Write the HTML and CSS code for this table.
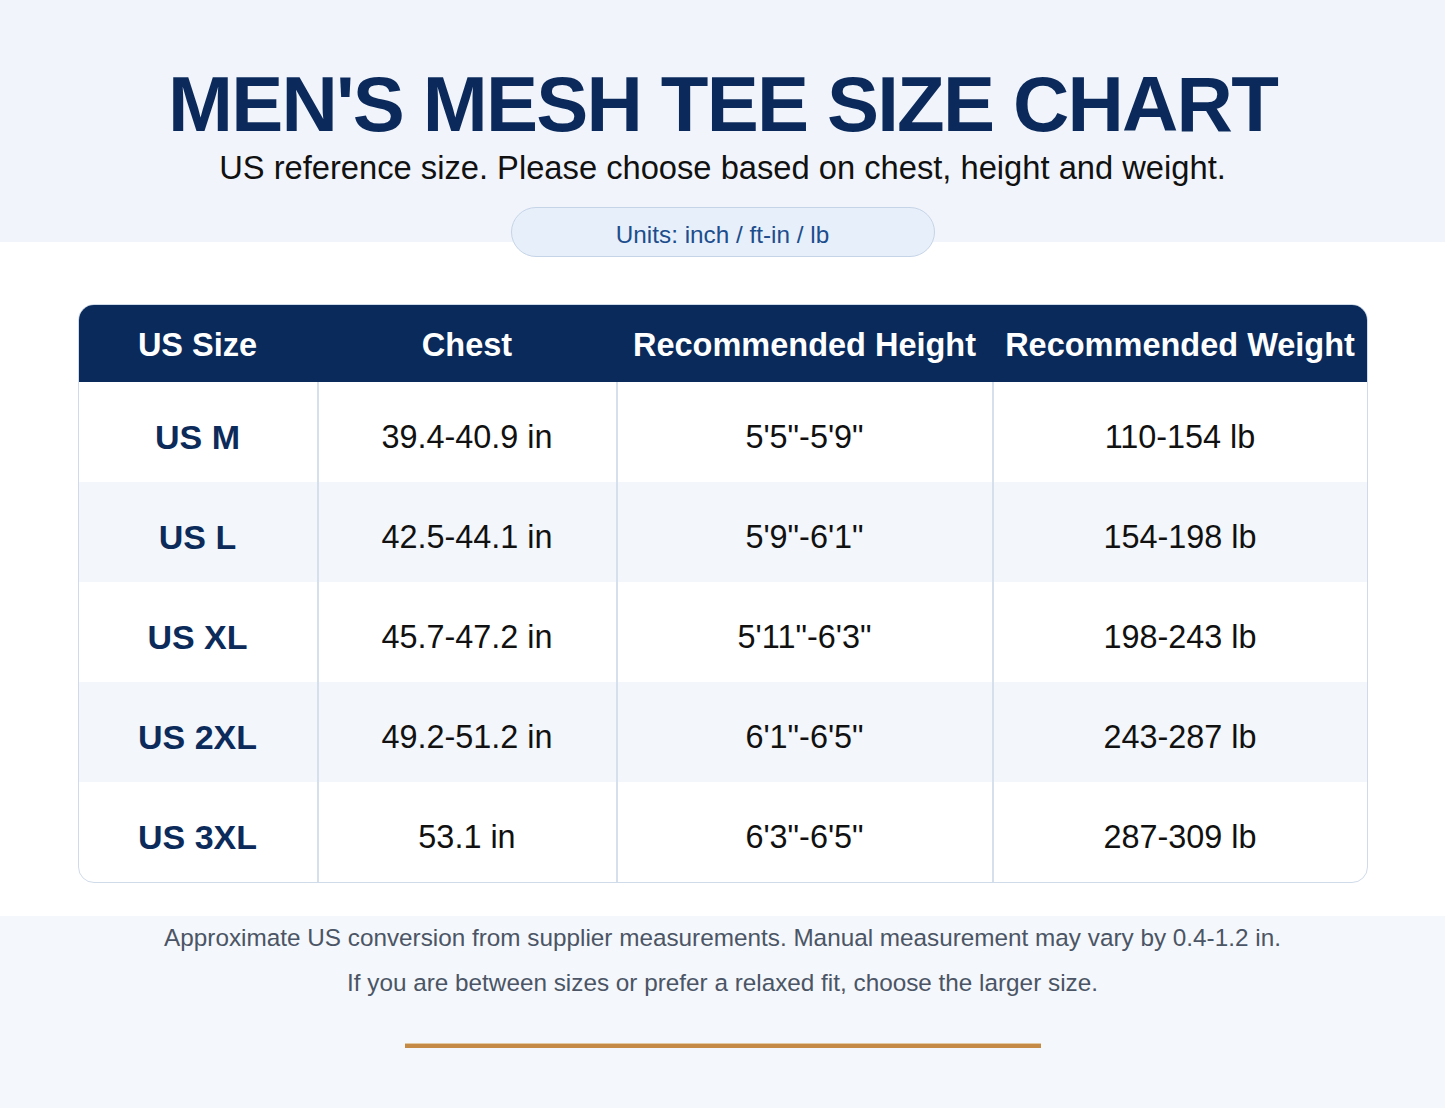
FILE: index.html
```html
<!DOCTYPE html>
<html lang="en">
<head>
<meta charset="utf-8">
<title>Men's Mesh Tee Size Chart</title>
<link rel="stylesheet" href="styles.css">
</head>
<body>
<header class="hero">
  <h1 class="title">MEN'S MESH TEE SIZE CHART</h1>
  <p class="subtitle">US reference size. Please choose based on chest, height and weight.</p>
  <div class="units">Units: inch / ft-in / lb</div>
</header>

<main class="chart-wrap">
  <div class="chart">
    <div class="row head">
      <div class="cell">US Size</div>
      <div class="cell">Chest</div>
      <div class="cell">Recommended Height</div>
      <div class="cell">Recommended Weight</div>
    </div>
    <div class="row">
      <div class="cell size">US M</div>
      <div class="cell">39.4-40.9 in</div>
      <div class="cell">5'5"-5'9"</div>
      <div class="cell">110-154 lb</div>
    </div>
    <div class="row alt">
      <div class="cell size">US L</div>
      <div class="cell">42.5-44.1 in</div>
      <div class="cell">5'9"-6'1"</div>
      <div class="cell">154-198 lb</div>
    </div>
    <div class="row">
      <div class="cell size">US XL</div>
      <div class="cell">45.7-47.2 in</div>
      <div class="cell">5'11"-6'3"</div>
      <div class="cell">198-243 lb</div>
    </div>
    <div class="row alt">
      <div class="cell size">US 2XL</div>
      <div class="cell">49.2-51.2 in</div>
      <div class="cell">6'1"-6'5"</div>
      <div class="cell">243-287 lb</div>
    </div>
    <div class="row">
      <div class="cell size">US 3XL</div>
      <div class="cell">53.1 in</div>
      <div class="cell">6'3"-6'5"</div>
      <div class="cell">287-309 lb</div>
    </div>
  </div>
</main>

<footer class="notes">
  <p>Approximate US conversion from supplier measurements. Manual measurement may vary by 0.4-1.2 in.</p>
  <p>If you are between sizes or prefer a relaxed fit, choose the larger size.</p>
  <div class="rule"></div>
</footer>
</body>
</html>
```

FILE: styles.css
```css
html, body {
  margin: 0;
  padding: 0;
}

body {
  background: #ffffff;
  font-family: "Liberation Sans", Arial, sans-serif;
  color: #111111;
  width: 1445px;
  min-height: 1108px;
  display: flex;
  flex-direction: column;
}

.hero {
  background: #f1f5fb;
  display: flex;
  flex-direction: column;
  align-items: center;
  padding-top: 65px;
}

.title {
  margin: 0;
  font-size: 78px;
  line-height: 78px;
  font-weight: 700;
  letter-spacing: -1.8px;
  color: #0b2a5b;
  white-space: nowrap;
}

.subtitle {
  margin: 5px 0 0;
  font-size: 32.7px;
  line-height: 39px;
  color: #111111;
  white-space: nowrap;
}

.units {
  position: relative;
  margin: 20px 0 -15px;
  box-sizing: border-box;
  width: 424px;
  height: 50px;
  border: 1.5px solid #c6d4e7;
  border-radius: 25px;
  background: #e7effa;
  color: #1c4d8c;
  font-size: 24.3px;
  display: flex;
  align-items: center;
  justify-content: center;
  padding-top: 5px;
}

.chart-wrap {
  display: flex;
  justify-content: center;
  padding: 62px 0 33px;
}

.chart {
  width: 1290px;
  box-sizing: border-box;
  border: 1.5px solid #d0dbe9;
  border-radius: 16px;
  overflow: hidden;
  background: #ffffff;
}

.row {
  display: grid;
  grid-template-columns: 238px 299px 376px 1fr;
  height: 100px;
}

.row.alt {
  background: #f3f6fb;
}

.row.head {
  height: 77px;
  background: #0a2a5c;
  color: #ffffff;
}

.cell {
  display: flex;
  align-items: center;
  justify-content: center;
  font-size: 32.4px;
  color: #111111;
  padding-top: 10px;
  box-sizing: border-box;
  white-space: nowrap;
}

.row .cell + .cell {
  border-left: 2px solid #d6e0ed;
}

.row.head .cell {
  color: #ffffff;
  font-weight: 700;
  font-size: 32.5px;
  padding-top: 4px;
}

.row.head .cell + .cell {
  border-left: 2px solid transparent;
}

.cell.size {
  font-weight: 700;
  font-size: 34px;
  color: #0c2b5b;
}

.notes {
  flex: 1;
  background: #f4f7fb;
  display: flex;
  flex-direction: column;
  align-items: center;
  padding-top: 0;
}

.notes p {
  margin: 0 0 2px;
  font-size: 24.3px;
  line-height: 43px;
  color: #4b5565;
  white-space: nowrap;
}

.rule {
  margin-top: 37px;
  width: 636px;
  height: 4px;
  background: #c58a45;
  border-top: 1px solid #e3c9a2;
}
```
